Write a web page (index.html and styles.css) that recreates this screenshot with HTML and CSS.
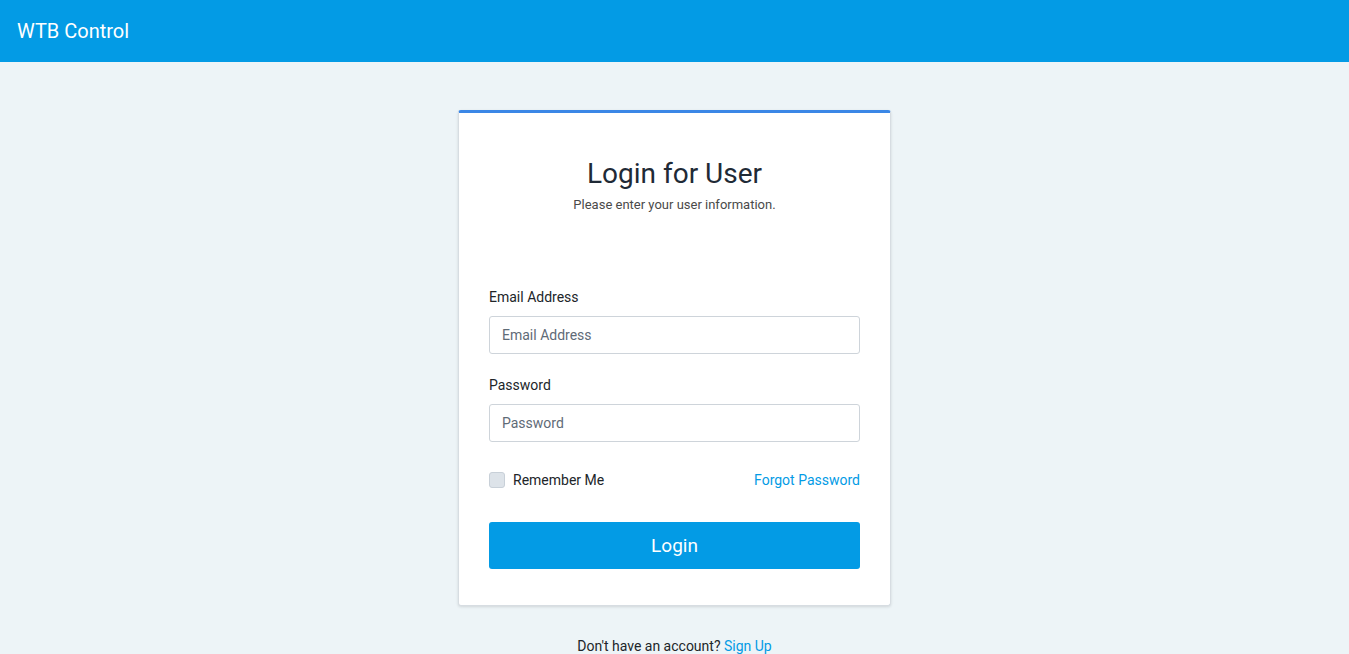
FILE: index.html
```html
<!DOCTYPE html>
<html lang="en">
<head>
  <meta charset="UTF-8">
  <title>WTB Control</title>
  <link rel="stylesheet" href="styles.css">
</head>
<body>
<header class="topbar">
  <span class="brand">WTB Control</span>
</header>

<main class="page">
  <div class="card">
    <h1 class="card-title">Login for User</h1>
    <p class="card-sub">Please enter your user information.</p>

    <form class="login-form">
      <label class="field-label" for="email">Email Address</label>
      <input class="field" id="email" type="text" placeholder="Email Address">

      <label class="field-label pw" for="pw">Password</label>
      <input class="field" id="pw" type="password" placeholder="Password">

      <div class="row">
        <label class="remember"><span class="check"></span>Remember Me</label>
        <a class="link" href="javascript:">Forgot Password</a>
      </div>

      <button class="btn" type="button">Login</button>
    </form>
  </div>

  <p class="signup">Don't have an account? <a class="link" href="javascript:">Sign Up</a></p>
</main>
</body>
</html>
```

FILE: styles.css
```css
* {
  margin: 0;
  padding: 0;
  box-sizing: border-box;
}

body {
  font-family: Roboto, "Liberation Sans", sans-serif;
  background-color: #edf4f7;
  color: #212529;
}

.topbar {
  height: 62px;
  background-color: #039be5;
  display: flex;
  align-items: center;
  padding-left: 17px;
}

.brand {
  color: #fff;
  font-size: 20px;
}

.page {
  display: flex;
  flex-direction: column;
  align-items: center;
  padding-top: 48px;
}

.card {
  width: 433px;
  background-color: #fff;
  border: 1px solid #d7dde2;
  border-top: 3px solid #3b87e6;
  border-radius: 3px;
  box-shadow: 0 1px 3px rgba(0, 0, 0, .12);
  padding: 44px 30px 36px;
}

.card-title {
  text-align: center;
  font-size: 28px;
  font-weight: 400;
  line-height: 34px;
  color: #1f2a36;
}

.card-sub {
  text-align: center;
  font-size: 13px;
  line-height: 16px;
  margin-top: 6px;
  color: #4a4a4a;
}

.login-form {
  display: flex;
  flex-direction: column;
  margin-top: 74px;
}

.field-label {
  font-size: 14px;
  line-height: 20px;
  color: #212529;
  margin-bottom: 9px;
}

.field-label.pw {
  margin-top: 21px;
}

.field {
  height: 38px;
  border: 1px solid #ced4da;
  border-radius: 3px;
  padding: 0 12px;
  font-family: inherit;
  font-size: 14px;
  color: #495057;
}

.field::placeholder {
  color: #5f6b77;
}

.row {
  display: flex;
  justify-content: space-between;
  align-items: center;
  margin-top: 28px;
  font-size: 14px;
  line-height: 20px;
}

.remember {
  display: flex;
  align-items: center;
  gap: 8px;
  color: #212529;
}

.check {
  width: 16px;
  height: 16px;
  border: 1px solid #c8d0d8;
  border-radius: 3px;
  background-color: #dde3e9;
}

.link {
  color: #039be5;
  text-decoration: none;
}

.btn {
  margin-top: 32px;
  height: 47px;
  border: none;
  border-radius: 3px;
  background-color: #039be5;
  color: #fff;
  font-family: inherit;
  font-size: 19px;
}

.signup {
  margin-top: 30px;
  font-size: 14px;
  line-height: 20px;
  color: #212529;
}
```
